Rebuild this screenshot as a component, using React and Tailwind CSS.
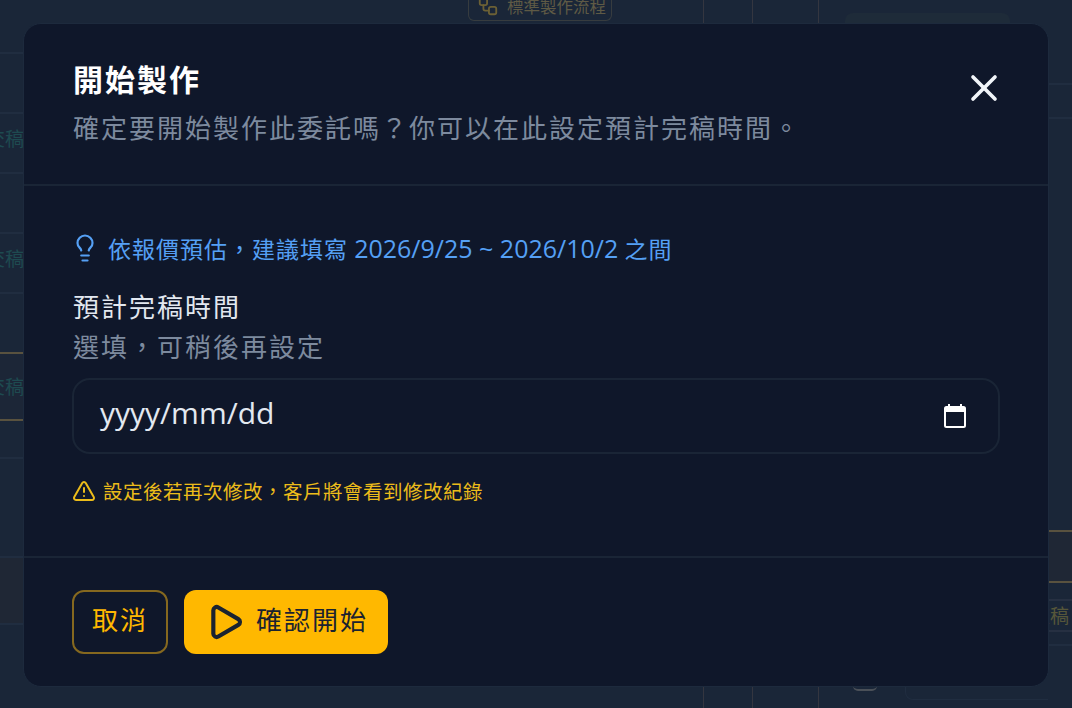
import React from 'react';
import { X, Lightbulb, TriangleAlert, Play, Workflow } from 'lucide-react';

const font = "font-['Noto_Sans_CJK_TC','Noto_Sans',sans-serif]";

const CalendarIcon = () => (
  <svg width="22" height="24" viewBox="0 0 22 24" fill="none" className="text-white">
    <path d="M5 0v3M17 0v3" stroke="currentColor" strokeWidth="2" />
    <rect x="1" y="3" width="20" height="20" rx="1.5" stroke="currentColor" strokeWidth="2" />
    <rect x="1" y="3" width="20" height="5" fill="currentColor" />
  </svg>
);

// rows of the page peeking out left and right of the modal
const leftRows = [
  { h: 'h-[54px]', line: 'border-[#202d40]' },
  { h: 'h-[60px]', line: 'border-[#202d40]' },
  { h: 'h-[60px]', line: 'border-[#202d40]', text: '交稿', tone: 'mb-[10px] text-[#1e4a50]' },
  { h: 'h-[60px]', line: 'border-[#202d40]' },
  { h: 'h-[60px]', line: 'border-[#202d40]', text: '交稿', tone: 'mb-[10px] text-[#1e4a50]' },
  { h: 'h-[60px]', line: 'border-[#59523f]' },
  { h: 'h-[67px]', line: 'border-[#59523f]', text: '交稿', tone: 'text-[#1e4a50]', bg: 'bg-[#1c2637]' },
  { h: 'h-[38px]', line: 'border-[#202d40]' },
  { h: 'h-[99px]', line: 'border-[#202d40]' },
  { h: 'h-[67px]', line: 'border-[#202d40]', bg: 'bg-[#1f2735]' },
];

const rightRows = [
  { h: 'h-[85px]', line: 'border-[#202d40]' },
  { h: 'h-[34px]', line: 'border-[#202d40]' },
  { h: 'h-[413px]', line: 'border-[#59523f]' },
  { h: 'h-[51px]', line: 'border-[#59523f]', bg: 'bg-[#1f2735]' },
  { h: 'h-[18px]', line: 'border-[#263042]' },
  { h: 'h-[31px]', line: 'border-[#263042]', text: '交稿', tone: 'mr-[3px] text-[#56563a]' },
  { h: 'h-[14px]', line: 'border-[#202d40]' },
];

const SideStrip = ({ rows }) => (
  <div className="flex w-6 shrink-0 flex-col">
    {rows.map((row, i) => (
      <div
        key={i}
        className={`flex ${row.h} ${row.bg || ''} items-center justify-end whitespace-nowrap border-b-2 ${row.line}`}
      >
        {row.text && <span className={`text-[19px] ${row.tone}`}>{row.text}</span>}
      </div>
    ))}
  </div>
);

const VLine = () => <div className="h-full w-px bg-[#343640]" />;

// Faint page content showing behind the modal
const Backdrop = () => (
  <div className="flex h-full w-full overflow-hidden">
    <SideStrip rows={leftRows} />
    <div className="flex flex-1 flex-col justify-between">
      <div className="flex h-6 pl-[444px]">
        <div className="-mt-[8px] flex h-[29px] w-[144px] items-center gap-2 rounded-b-md border-x border-b border-[#373c3f] pl-2 text-[16.5px] leading-none text-[#5f5a45]">
          <Workflow size={22} className="text-[#6b6035]" />
          標準製作流程
        </div>
        <div className="ml-[91px]"><VLine /></div>
        <div className="ml-[48px]"><VLine /></div>
        <div className="ml-[65px]"><VLine /></div>
        <div className="ml-[26px] mt-[13px] h-[11px] w-[165px] rounded-t-lg bg-[#1e2b39]" />
      </div>
      <div className="flex h-[22px] pl-[679px]">
        <VLine />
        <div className="ml-[48px]"><VLine /></div>
        <div className="ml-[65px]"><VLine /></div>
        <div className="ml-[34px] h-[5px] w-[24px] rounded-b-full border-b-2 border-[#4a5058]" />
        <div className="ml-[28px] h-[14px] flex-1 rounded-bl-lg border-b border-l border-[#202d40]" />
      </div>
    </div>
    <SideStrip rows={rightRows} />
  </div>
);

export default function App() {
  return (
    <div lang="zh-TW" className={`relative h-[708px] w-[1072px] overflow-hidden bg-[#1a2638] ${font}`}>
      <Backdrop />
      <div className="absolute inset-0 px-[23px] pb-[21px] pt-[23px]">
        <div className="h-[664px] overflow-hidden rounded-[18px] border border-[#1d2a3d] bg-[#0f172a]">
          <div className="flex h-[162px] items-start justify-between border-b-2 border-[#1a2536] pl-[49px] pr-[42px] pt-[32px]">
            <div>
              <h2 className="text-[30px] font-bold leading-[44px] tracking-[2px] text-white">開始製作</h2>
              <p className="mt-[5px] text-[26px] leading-[44px] tracking-[2px] text-[#7d8a9e]">
                確定要開始製作此委託嗎？你可以在此設定預計完稿時間。
              </p>
            </div>
            <button className="mt-[10px] text-[#f1f5f9]">
              <X size={44} strokeWidth={2} />
            </button>
          </div>

          <div className="h-[372px] border-b-2 border-[#1a2536] px-[48px] pt-[43px]">
            <div className="flex items-center gap-[8px] text-[#55a0f5]">
              <Lightbulb size={30} strokeWidth={1.75} className="-ml-[2px]" />
              <span className="text-[23px] leading-[38px] tracking-[1px]">
                依報價預估，建議填寫 <span className="font-['Open_Sans',sans-serif] text-[25px] tracking-normal">2026/9/25 ~ 2026/10/2</span> 之間
              </span>
            </div>
            <div className="ml-px mt-[19px] text-[26px] leading-[40px] tracking-[2px] text-[#e2e8f0]">預計完稿時間</div>
            <div className="ml-px text-[26px] leading-[40px] tracking-[2px] text-[#7d8a9e]">選填，可稍後再設定</div>
            <div className="mt-[12px] flex h-[76px] items-center justify-between rounded-[18px] border-2 border-[#1a2536] pl-[26px] pr-[32px]">
              <span className="mb-[8px] font-['Open_Sans',sans-serif] text-[30px] text-[#e2e8f0]">yyyy/mm/dd</span>
              <CalendarIcon />
            </div>
            <div className="mt-[22px] flex items-center gap-[7px] text-[#ecbc1a]">
              <TriangleAlert size={24} strokeWidth={2} />
              <span className="text-[19.5px] leading-[30px] tracking-[0.5px]">設定後若再次修改，客戶將會看到修改紀錄</span>
            </div>
          </div>

          <div className="flex gap-4 pl-[48px] pt-[32px]">
            <button className="flex h-[64px] w-[96px] items-center justify-center rounded-[12px] border-2 border-[#85681f] text-[26px] tracking-[2px] text-[#ffb800]">
              <span className="mb-[8px]">取消</span>
            </button>
            <button className="flex h-[64px] w-[204px] items-center gap-[11px] rounded-[12px] bg-[#ffb800] pl-[21px] text-[26px] tracking-[2px] text-[#1b2330]">
              <Play size={40} strokeWidth={2.5} />
              <span className="mb-[8px]">確認開始</span>
            </button>
          </div>
        </div>
      </div>
    </div>
  );
}
